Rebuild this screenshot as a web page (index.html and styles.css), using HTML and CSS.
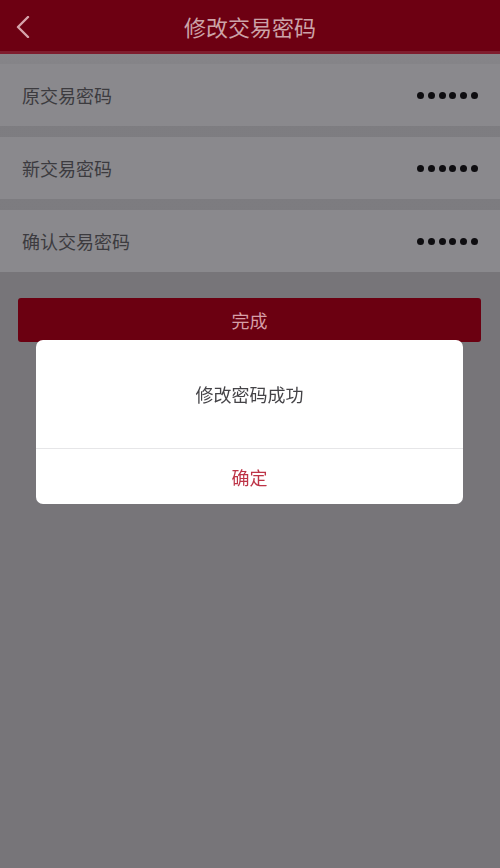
FILE: index.html
```html
<!DOCTYPE html>
<html lang="zh-CN">
<head>
<meta charset="utf-8">
<title>修改交易密码</title>
<link rel="stylesheet" href="styles.css">
</head>
<body>
<div class="page">
  <header class="topbar">
    <span class="back">
      <svg width="14" height="22" viewBox="0 0 14 22"><path d="M12 1 L2 11 L12 21" fill="none" stroke="#d6a3ab" stroke-width="2.4" stroke-linecap="round" stroke-linejoin="round"/></svg>
    </span>
    <h1 class="title">修改交易密码</h1>
  </header>
  <div class="form">
    <div class="row"><span class="label">原交易密码</span><span class="dots"><i></i><i></i><i></i><i></i><i></i><i></i></span></div>
    <div class="row"><span class="label">新交易密码</span><span class="dots"><i></i><i></i><i></i><i></i><i></i><i></i></span></div>
    <div class="row"><span class="label">确认交易密码</span><span class="dots"><i></i><i></i><i></i><i></i><i></i><i></i></span></div>
  </div>
  <div class="submit">完成</div>
</div>
<div class="overlay">
  <div class="dialog">
    <div class="msg">修改密码成功</div>
    <div class="ok">确定</div>
  </div>
</div>
</body>
</html>
```

FILE: styles.css
```css
html, body {
  margin: 0;
  padding: 0;
  background: #777579;
  font-family: "Noto Sans CJK SC", "Noto Sans", sans-serif;
}
.page {
  width: 500px;
  min-height: 868px;
  background: #777579;
}
.topbar {
  position: relative;
  height: 51px;
  background: #6d0012;
  border-bottom: 3px solid #7f1d2e;
  display: flex;
  align-items: center;
  justify-content: center;
}
.back {
  position: absolute;
  left: 16px;
  top: 16px;
  width: 14px;
  height: 22px;
  display: flex;
}
.title {
  margin: 0;
  font-size: 22px;
  font-weight: 400;
  color: #cca3a8;
  line-height: 1;
}
.form {
  padding-top: 10px;
  background: linear-gradient(#868589, #7e7d81 60px, #7c7b7f);
}
.row {
  height: 62px;
  margin-bottom: 11px;
  background: #8a898d;
  display: flex;
  align-items: center;
  justify-content: space-between;
  padding: 0 22px;
}
.row:last-child {
  margin-bottom: 0;
}
.label {
  font-size: 18px;
  color: #3c3b3f;
  line-height: 1;
}
.dots {
  display: flex;
  gap: 3.8px;
  margin-right: 0;
}
.dots i {
  display: block;
  width: 7px;
  height: 7px;
  border-radius: 50%;
  background: #0e0d10;
}
.submit {
  margin: 26px 19px 0 18px;
  height: 44px;
  border-radius: 3px;
  background: #6b0011;
  color: #d69ea7;
  font-size: 18px;
  display: flex;
  align-items: center;
  justify-content: center;
}
.overlay {
  position: fixed;
  inset: 0;
}
.dialog {
  position: absolute;
  left: 36px;
  top: 340px;
  width: 427px;
  height: 164px;
  background: #ffffff;
  border-radius: 7px;
  display: flex;
  flex-direction: column;
  overflow: hidden;
}
.msg {
  height: 108px;
  display: flex;
  align-items: center;
  justify-content: center;
  font-size: 18px;
  color: #444347;
  border-bottom: 1px solid #e6e6e8;
}
.ok {
  flex: 1;
  display: flex;
  align-items: center;
  justify-content: center;
  font-size: 18px;
  color: #bd3447;
}
```
